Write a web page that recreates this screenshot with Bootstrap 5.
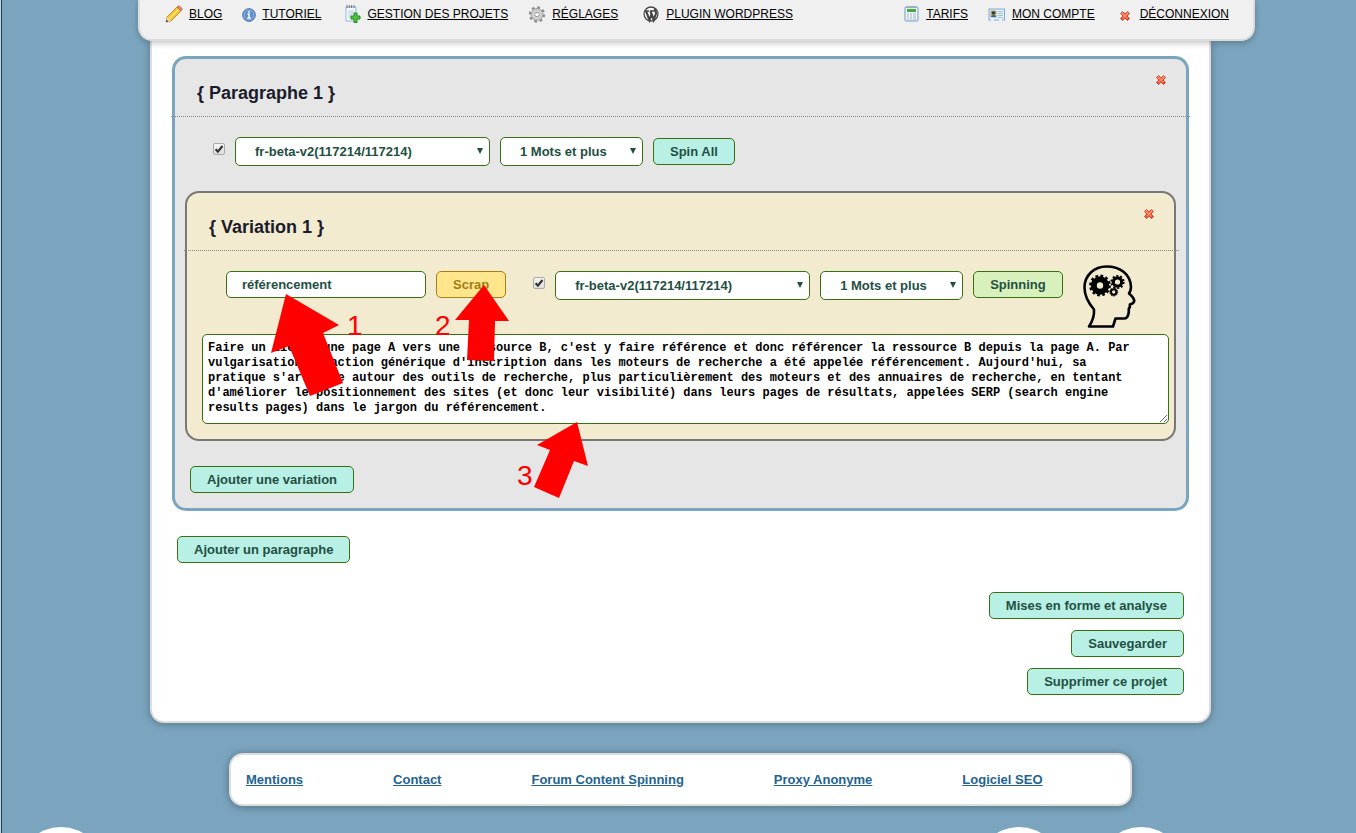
<!DOCTYPE html>
<html lang="fr">
<head>
<meta charset="utf-8">
<meta name="viewport" content="width=device-width, initial-scale=1">
<title>Gestion des projets</title>
<link href="https://cdn.jsdelivr.net/npm/bootstrap@5.3.0/dist/css/bootstrap.min.css" rel="stylesheet">
<script src="https://cdn.jsdelivr.net/npm/bootstrap@5.3.0/dist/js/bootstrap.bundle.min.js" defer></script>
<style>
body{font-family:"Liberation Sans",Arial,sans-serif;font-size:13px;line-height:15px;color:#1b1b2b;padding-left:5px;min-height:100vh;overflow-x:hidden;background:linear-gradient(to right,#c3d3de 1px,#23455c 1px 2px,#7ba5bf 2px)}
.shell{max-width:1061px}
.topbar{margin:0 -44px 0 -12px;height:41px;padding:5px 24px 0 25px;background:#f0f0f0;border:2px solid #ddd;border-top:0;border-radius:0 0 14px 14px;box-shadow:0 2px 6px rgba(0,0,0,.25);z-index:2}
.topbar a{color:#000;font-size:12px;line-height:18px;display:flex;align-items:center;gap:6px}
.topbar svg{flex:none}
.sheet{background:#fff;border:2px solid #ddd;border-top:0;border-radius:0 0 14px 14px;box-shadow:0 1px 8px rgba(0,0,0,.3);padding:15px 20px 26px}
.para-panel{background:#e6e6e6;border:3px solid #7ba5bf;border-radius:14px;padding:0 10px 15px}
.vari-panel{background:#f2ebd0;border:2px solid #777;border-radius:14px;padding:0 5px 15px 15px}
.panel-head{height:58px;padding:24px 22px 0;border-bottom:1px dotted #888}
.para-panel>.panel-head{margin:0 -14px;padding-left:26px;padding-right:23px}
.vari-panel>.panel-head{margin:0 -10px 0 -18px;padding-left:25px}
.panel-head{padding-right:24px}
.panel-head h2{font-size:18px;line-height:20px;font-weight:700;margin:0}
.kill{border:0;background:none;padding:0;width:12px;height:12px;display:block;margin-top:-9px}
.kill svg{display:block}
.tool-row{gap:10px}
.para-tools{padding:20px 0 25px 28px}
.para-tools .tick{margin-bottom:6px}
.vari-tools{padding-top:12px}
.vari-tools .tick{margin:14px 0 0 17px}
.act,.pick,.word{font-size:13px;line-height:15px;font-weight:700;color:#234f42;border:1px solid #38700f;border-radius:5px;height:27px}
.act{background:#b8f0e5;padding:5px 16px}
.act.gold{background:#ffe68c;border-color:#a88012;color:#a07c10}
.act.leaf{background:#d8f1bc}
.pick{background:#fff url("data:image/svg+xml,%3Csvg xmlns='http://www.w3.org/2000/svg' width='6' height='7'%3E%3Cpath d='M0 0h6L3 6z' fill='%23234f42'/%3E%3C/svg%3E") no-repeat right 6px top 10px;height:29px;padding:0 19px;appearance:none}
.pick.wide{width:255px}.pick.slim{width:143px}
.word{background:#fff;width:200px;padding:0 15px}
.tick{appearance:none;width:12px;height:12px;margin:0;border:1px solid #aaa;border-radius:2px;background:linear-gradient(#f5f5f5,#ddd)}
.tick:checked{background:url("data:image/svg+xml,%3Csvg xmlns='http://www.w3.org/2000/svg' viewBox='0 0 10 10'%3E%3Cpath d='M1.6 5.2l2.3 2.4L8.5 2' stroke='%23333' stroke-width='2.2' fill='none'/%3E%3C/svg%3E"),linear-gradient(#f5f5f5,#ddd)}
.copy{width:100%;height:90px;display:block;border:1px solid #38700f;border-radius:5px;padding:6px 28px 6px 5px;font:700 12px/15px "Liberation Mono",monospace;color:#000;resize:both}
.adder{margin:25px 0 0 5px}
.finish{gap:11px;padding:29px 5px 0 0}
.notes{left:0;top:0;pointer-events:none}
.notes text{font-size:28px}
.foot{max-width:903px;height:53px;margin-top:30px;border:2px solid #ddd;border-radius:14px;background:#fff;box-shadow:0 1px 8px rgba(0,0,0,.35);padding:0 15px;gap:90px}
.foot a{color:#236390;font-weight:700}
.clouds{height:6px;margin:21px 0 0 -5px;overflow:hidden}
</style>
</head>
<body>
<svg class="position-absolute" width="0" height="0" aria-hidden="true">
<defs>
<linearGradient id="red" x2="0" y2="1"><stop stop-color="#ff9a7d"/><stop offset="1" stop-color="#e23314"/></linearGradient>
<symbol id="cross" viewBox="0 0 12 12"><path d="M3.500 1.500L6 4l2.500-2.500 2 2L8 6l2.500 2.500-2 2L6 8l-2.500 2.500-2-2L4 6 1.500 3.500z" fill="url(#red)" stroke="#d6452c" stroke-linejoin="round"/><path d="M3.500 3.500l5 5M8.500 3.500l-5 5" stroke="#ff8a68" stroke-width="1.200"/></symbol>
</defs>
</svg>
<div class="shell mx-auto">
<nav class="topbar position-relative d-flex align-items-start">
 <a href="#" class="me-3"><svg width="18" height="18" viewBox="0 0 18 18"><path d="M2 12L12 2l4 4L6 16l-5 1z" fill="#f5c227" stroke="#a97512" stroke-width=".7"/><path d="M4 14L14 4" stroke="#ffe98a" stroke-width="1.500"/><path d="M12 2l2-1.500L17.500 4 16 6z" fill="#e8796a" stroke="#b56a5c" stroke-width=".6"/><path d="M2 12l4 4-5 1z" fill="#f3d7ae"/><path d="M1 17l.6-2.300L3.300 16.500z" fill="#222"/></svg>BLOG</a>
 <a href="#" class="ms-1 me-3"><svg width="14" height="16" viewBox="0 0 14 16"><circle cx="7" cy="9" r="6.300" fill="#5d8fca" stroke="#3f6ca6"/><circle cx="7" cy="9" r="5" fill="none" stroke="#a9c6e8" stroke-width=".7"/><path d="M5.500 8H7v4M5.300 12h3.600M7 5v1.700" stroke="#fff" stroke-width="1.400" fill="none"/></svg>TUTORIEL</a>
 <a href="#" class="ms-2 me-3"><svg width="16" height="18" viewBox="0 0 16 18"><path d="M1 2h10v14H1z" fill="#f4fafe" stroke="#8fb9d6"/><path d="M2 0v3M4.300 0v3M6.600 0v3M9 0v3" stroke="#555" stroke-width=".8"/><path d="M3 6h6M3 8h6M3 10h4M3 12h3" stroke="#b4cbdc"/><path d="M9 8h3v3h3v3h-3v3.500H9V14H6v-3h3z" fill="#4fc23c" stroke="#258b22"/></svg>GESTION DES PROJETS</a>
 <a href="#" class="ms-1 me-3"><svg width="18" height="18" viewBox="0 0 18 18"><g fill="none" stroke="#8b8b8b"><circle cx="9" cy="9.500" r="7" stroke-width="2.400" stroke-dasharray="2.700 2.800"/><circle cx="9" cy="9.500" r="4.700" fill="#ddd" stroke="#ccc" stroke-width="2.400"/><circle cx="9" cy="9.500" r="6" stroke-width=".7"/><circle cx="9" cy="9.500" r="2.300" fill="#fff" stroke-width=".9"/></g></svg>RÉGLAGES</a>
 <a href="#" class="ms-2"><svg width="18" height="18" viewBox="0 0 18 18"><circle cx="9" cy="9" r="8.500" fill="#fff"/><circle cx="9" cy="9" r="7" fill="#fff" stroke="#444" stroke-width="1.300"/><path d="M3 6h4M8 6h4" stroke="#444" stroke-width="1.300"/><path d="M4 6l3.500 9L9.600 9M8.400 6l3.300 9L14 8.500c.5-2-1.500-2-1-4.500" fill="none" stroke="#444" stroke-width="2.200"/></svg>PLUGIN WORDPRESS</a>
 <a href="#" class="ms-auto me-3"><svg width="16" height="18" viewBox="0 0 16 18"><rect x="1" y="2" width="13" height="14" rx="1" fill="#eef6fd" stroke="#6d9cce"/><path d="M3 1v2M5 1v2M7 1v2M9 1v2M11 1v2" stroke="#888" stroke-width=".8"/><path d="M3 4h9v3H3z" fill="#42ad3c"/><path d="M3 8h9v6.500H3z" fill="#a5b6c5"/><path d="M3 9h9M3 11h9M3 13h9M5.500 8v6.500M8.500 8v6.500" stroke="#fff" stroke-width=".8"/></svg>TARIFS</a>
 <a href="#" class="ms-1 me-4"><svg width="18" height="16" viewBox="0 0 18 16"><rect x="1" y="3" width="15.500" height="11" fill="#e9f3fc" stroke="#78a8d8"/><rect x="3" y="5" width="5" height="6" fill="#f2ca52" stroke="#555" stroke-width=".5"/><circle cx="5.500" cy="7" r="1.800" fill="#333"/><path d="M3 11c1-3 4-3 5 0z" fill="#2765ad"/><path d="M9.500 5.500h5.500M9.500 7.500h5.500M9.500 9.500h5.500M9.500 11.500h5.500" stroke="#a7bfd4"/><path d="M3 14h3M11 14h3" stroke="#fff" stroke-width="1.500"/></svg>MON COMPTE</a>
 <a href="#"><svg width="15" height="12" viewBox="0 0 15 12" class="mt-1"><use href="#cross" width="12" height="12"/></svg>DÉCONNEXION</a>
</nav>
<main class="sheet">
 <section class="para-panel position-relative">
  <div class="panel-head d-flex justify-content-between"><h2>{ Paragraphe 1 }</h2><button class="kill" type="button" aria-label="Supprimer le paragraphe"><svg width="12" height="12"><use href="#cross"/></svg></button></div>
  <div class="tool-row para-tools d-flex flex-wrap align-items-center">
   <input class="tick" type="checkbox" checked aria-label="Activer le dictionnaire">
   <select class="pick wide" aria-label="Dictionnaire"><option>fr-beta-v2(117214/117214)</option></select>
   <select class="pick slim" aria-label="Nombre de mots"><option>1 Mots et plus</option></select>
   <button class="act" type="button">Spin All</button>
  </div>
  <section class="vari-panel">
   <div class="panel-head d-flex justify-content-between"><h2>{ Variation 1 }</h2><button class="kill" type="button" aria-label="Supprimer la variation"><svg width="12" height="12"><use href="#cross"/></svg></button></div>
   <div class="tool-row vari-tools d-flex flex-wrap align-items-start ps-4">
    <input class="word mt-2" type="text" value="référencement" aria-label="Mot-clé">
    <button class="act gold mt-2" type="button">Scrap</button>
    <input class="tick" type="checkbox" checked aria-label="Activer le dictionnaire de la variation">
    <select class="pick wide mt-2" aria-label="Dictionnaire de la variation"><option>fr-beta-v2(117214/117214)</option></select>
    <select class="pick slim mt-2" aria-label="Nombre de mots de la variation"><option>1 Mots et plus</option></select>
    <button class="act leaf mt-2" type="button">Spinning</button>
    <svg class="ms-2" width="56" height="67" viewBox="1080 264 56 67"><path d="M1088 327.500c4-6 5.500-10 5-17-6-7-9.500-14-9.500-22 0-12 9.500-21 22-21 14 0 24 8 24.500 20.500 0 3-.7 4.500-2 6.500 3 2.500 5 5 5.300 7.500-.5 2-2 3-4.500 3.500.5 2 .2 3-1 4 .3 4-.5 8-3 9.800-3 .5-7 .2-10.300.2l-2.500 8z" fill="none" stroke="#000" stroke-width="2.600" stroke-linejoin="round"/><g fill="none" stroke="#000"><circle cx="1099" cy="286.500" r="6.200" stroke-width="6"/><circle cx="1099" cy="286.500" r="9.700" stroke-width="2.400" stroke-dasharray="2.700 2.400"/><circle cx="1116.500" cy="283" r="4.200" stroke-width="3.200"/><circle cx="1116.500" cy="283" r="6.200" stroke-width="1.800" stroke-dasharray="2 1.900"/><circle cx="1112.700" cy="293" r="2.700" stroke-width="2"/><circle cx="1112.700" cy="293" r="4" stroke-width="1" stroke-dasharray="1.400 1.100"/></g></svg>
   </div>
   <textarea class="copy mt-1" aria-label="Texte de la variation" spellcheck="false">Faire un lien d'une page A vers une ressource B, c'est y faire référence et donc référencer la ressource B depuis la page A. Par vulgarisation, l'action générique d'inscription dans les moteurs de recherche a été appelée référencement. Aujourd'hui, sa pratique s'articule autour des outils de recherche, plus particulièrement des moteurs et des annuaires de recherche, en tentant d'améliorer le positionnement des sites (et donc leur visibilité) dans leurs pages de résultats, appelées SERP (search engine results pages) dans le jargon du référencement.</textarea>
  </section>
  <button class="act adder" type="button">Ajouter une variation</button>
  <svg class="notes position-absolute" width="1011" height="448" viewBox="175 60 1011 448" fill="#f00"><path d="M286 295L339 326 323 334 343 384 310 397 289 347 271 354zM484 286L509 322 495 322 494 362 467 361 469 321 455 321zM577 423L588 467 574 462 559 499 534 488 550 451 537 446z"/><text x="347" y="336">1</text><text x="435" y="336">2</text><text x="517" y="486">3</text></svg>
 </section>
 <button class="act adder" type="button">Ajouter un paragraphe</button>
 <div class="finish d-flex flex-column align-items-end">
  <button class="act" type="button">Mises en forme et analyse</button>
  <button class="act" type="button">Sauvegarder</button>
  <button class="act" type="button">Supprimer ce projet</button>
 </div>
</main>
<footer class="foot mx-auto d-flex align-items-center">
 <a href="#">Mentions</a><a href="#">Contact</a><a href="#">Forum Content Spinning</a><a href="#">Proxy Anonyme</a><a href="#">Logiciel SEO</a>
</footer>
</div>
<div class="clouds"><svg class="d-block" width="1356" height="6" fill="#fff"><circle cx="61" cy="43" r="43"/><circle cx="1019" cy="43" r="43"/><circle cx="1141" cy="43" r="43"/></svg></div>
</body>
</html>
